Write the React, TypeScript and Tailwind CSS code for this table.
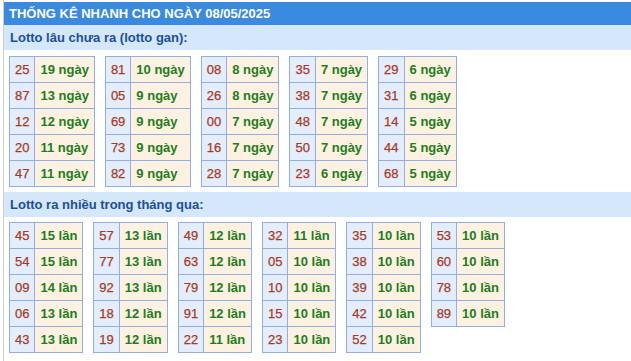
import React from 'react'

type Pair = [string, string]

const gan: Pair[][] = [
  [['25', '19 ngày'], ['87', '13 ngày'], ['12', '12 ngày'], ['20', '11 ngày'], ['47', '11 ngày']],
  [['81', '10 ngày'], ['05', '9 ngày'], ['69', '9 ngày'], ['73', '9 ngày'], ['82', '9 ngày']],
  [['08', '8 ngày'], ['26', '8 ngày'], ['00', '7 ngày'], ['16', '7 ngày'], ['28', '7 ngày']],
  [['35', '7 ngày'], ['38', '7 ngày'], ['48', '7 ngày'], ['50', '7 ngày'], ['23', '6 ngày']],
  [['29', '6 ngày'], ['31', '6 ngày'], ['14', '5 ngày'], ['44', '5 ngày'], ['68', '5 ngày']],
]

const nhieu: Pair[][] = [
  [['45', '15 lần'], ['54', '15 lần'], ['09', '14 lần'], ['06', '13 lần'], ['43', '13 lần']],
  [['57', '13 lần'], ['77', '13 lần'], ['92', '13 lần'], ['18', '12 lần'], ['19', '12 lần']],
  [['49', '12 lần'], ['63', '12 lần'], ['79', '12 lần'], ['91', '12 lần'], ['22', '11 lần']],
  [['32', '11 lần'], ['05', '10 lần'], ['10', '10 lần'], ['15', '10 lần'], ['23', '10 lần']],
  [['35', '10 lần'], ['38', '10 lần'], ['39', '10 lần'], ['42', '10 lần'], ['52', '10 lần']],
  [['53', '10 lần'], ['60', '10 lần'], ['78', '10 lần'], ['89', '10 lần']],
]

function LotoTable({ rows }: { rows: Pair[] }) {
  return (
    <table className="border-collapse border border-[#93aee3] text-[13px]">
      <tbody>
        {rows.map(([num, val]) => (
          <tr key={num} className="h-[26px]">
            <td className="border border-[#93aee3] bg-[#e3edfb] px-[5px] text-center font-medium text-[#a83a24] whitespace-nowrap [-webkit-text-stroke:0.25px_#a83a24]">
              {num}
            </td>
            <td className="border border-[#93aee3] bg-[#fdf2e1] px-[5px] font-bold text-[#1d7d1d] whitespace-nowrap">
              {val}
            </td>
          </tr>
        ))}
      </tbody>
    </table>
  )
}

function SubHeader({ title }: { title: string }) {
  return (
    <div className="h-[25px] bg-[#d4e7fb] pl-[6px] flex items-center text-[13px] font-bold text-[#1c4f9b]">
      {title}
    </div>
  )
}

export default function App() {
  return (
    <div className="w-[631px] h-[361px] bg-white overflow-hidden font-['Liberation_Sans',Arial,sans-serif]">
      <div className="ml-[3px] pt-[2px] h-full border-l border-[#cfcfcf]">
        <div className="h-[23px] bg-[#3a8ae0] pl-[5px] flex items-center text-[13px] font-bold text-white">
          THỐNG KÊ NHANH CHO NGÀY 08/05/2025
        </div>
        <SubHeader title="Lotto lâu chưa ra (lotto gan):" />
        <div className="flex items-start gap-[10px] pl-[5px] pt-[6px] pb-[5px]">
          {gan.map((t, i) => (
            <LotoTable key={i} rows={t} />
          ))}
        </div>
        <SubHeader title="Lotto ra nhiều trong tháng qua:" />
        <div className="flex items-start gap-[10px] pl-[5px] pt-[5px]">
          {nhieu.map((t, i) => (
            <LotoTable key={i} rows={t} />
          ))}
        </div>
      </div>
    </div>
  )
}
